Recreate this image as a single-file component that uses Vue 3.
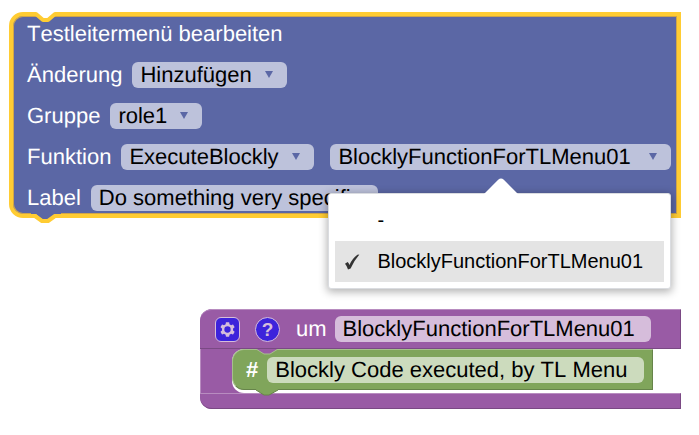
<script setup>
import { ref } from 'vue'

const action = ref('Hinzufügen')
const group = ref('role1')
const kind = ref('ExecuteBlockly')
const target = ref('BlocklyFunctionForTLMenu01')
const label = ref('Do something very specific')
const procedureName = ref('BlocklyFunctionForTLMenu01')
const comment = ref('Blockly Code executed, by TL Menu')

const targets = ['-', 'BlocklyFunctionForTLMenu01']
const menuOpen = ref(true)

function choose(name) {
  target.value = name
  menuOpen.value = false
}
</script>

<template>
  <main class="workspace">
    <section class="block menu-block">
      <svg class="notch-top" width="30" height="12" viewBox="0 0 30 12" aria-hidden="true">
        <path class="cut" d="M3 0 L11 6 H18 L26 0Z" />
        <path class="outline" d="M0 2 H5 L12 8 H17 L24 2 H30" />
      </svg>
      <svg class="notch-bottom" width="30" height="12" viewBox="0 0 30 12" aria-hidden="true">
        <path class="body" d="M0 0 H30 V1 H24 L17 7 H12 L5 1 H0Z" />
        <path class="outline" d="M0 3 H4 L11 8 H17 L24 3 H30" />
      </svg>

      <div class="row">Testleitermenü bearbeiten</div>
      <div class="row">
        <label for="action">Änderung</label>
        <span class="dropdown">
          <select id="action" v-model="action" class="field"><option>Hinzufügen</option></select>
          <svg class="caret" viewBox="0 0 8 7" aria-hidden="true"><path d="M0 0H8L4 7Z" /></svg>
        </span>
      </div>
      <div class="row">
        <label for="group">Gruppe</label>
        <span class="dropdown">
          <select id="group" v-model="group" class="field"><option>role1</option></select>
          <svg class="caret" viewBox="0 0 8 7" aria-hidden="true"><path d="M0 0H8L4 7Z" /></svg>
        </span>
      </div>
      <div class="row">
        <label for="kind">Funktion</label>
        <span class="dropdown kind">
          <select id="kind" v-model="kind" class="field"><option>ExecuteBlockly</option></select>
          <svg class="caret" viewBox="0 0 8 7" aria-hidden="true"><path d="M0 0H8L4 7Z" /></svg>
        </span>
        <span class="dropdown target">
          <select v-model="target" class="field" aria-label="Funktion" @mousedown.prevent="menuOpen = !menuOpen">
            <option v-for="name in targets" :key="name">{{ name }}</option>
          </select>
          <svg class="caret" viewBox="0 0 8 7" aria-hidden="true"><path d="M0 0H8L4 7Z" /></svg>
          <div v-if="menuOpen" class="popup" role="listbox" aria-label="Funktion">
            <button
              v-for="name in targets"
              :key="name"
              type="button"
              role="option"
              class="option"
              :class="{ selected: name === target }"
              :aria-selected="name === target"
              @click="choose(name)"
            >
              <svg v-if="name === target" class="check" viewBox="0 0 16 16" aria-hidden="true">
                <path d="M1 9.8 L3.6 8 Q4.9 9.2 5.4 11 Q8.4 4.4 13.4 0.8 L15.4 0.4 Q10.4 6 6.6 14.4 L4 15.6 Q3 12 1 9.8Z" />
              </svg>
              {{ name }}
            </button>
          </div>
        </span>
      </div>
      <div class="row">
        <label for="label">Label</label>
        <input id="label" v-model="label" class="field label-input" type="text" />
      </div>
    </section>

    <section class="procedure">
      <header class="head">
        <button class="icon gear" type="button" aria-label="Einstellungen">
          <svg viewBox="0 0 16 16" aria-hidden="true">
            <path
              fill-rule="evenodd"
              d="m4.203,7.296 0,1.368 -0.92,0.677 -0.11,0.41 0.9,1.559 0.41,0.11 1.043,-0.457 1.187,0.683 0.127,1.134 0.3,0.3 1.8,0 0.3,-0.299 0.127,-1.138 1.185,-0.682 1.046,0.458 0.409,-0.11 0.9,-1.559 -0.11,-0.41 -0.92,-0.677 0,-1.366 0.92,-0.677 0.11,-0.41 -0.9,-1.559 -0.409,-0.109 -1.046,0.458 -1.185,-0.682 -0.127,-1.138 -0.3,-0.299 -1.8,0 -0.3,0.3 -0.126,1.135 -1.187,0.682 -1.043,-0.457 -0.41,0.11 -0.899,1.559 0.108,0.409z M10.2 8a2.2 2.2 0 1 0 -4.4 0a2.2 2.2 0 1 0 4.4 0z"
            />
          </svg>
        </button>
        <button class="icon help" type="button">?</button>
        <label for="procedure-name">um</label>
        <input id="procedure-name" v-model="procedureName" class="field name-input" type="text" />
      </header>
      <div class="slot">
        <div class="comment-block">
          <svg class="comment-notch" width="26" height="8" viewBox="0 0 26 8" aria-hidden="true">
            <path class="socket" d="M2 0 L10 5 H16 L24 0Z" />
            <path class="lit" d="M2 0 L10 5 H16 L24 0" />
          </svg>
          <svg class="comment-tab" width="26" height="8" viewBox="0 0 26 8" aria-hidden="true">
            <path class="leaf" d="M2 0 V1 L10 6 H15 L24 1 V0Z" />
            <path class="shade" d="M2 1 L10 6 H15 L24 1" />
          </svg>
          <label for="comment">#</label>
          <input id="comment" v-model="comment" class="field comment-input" type="text" />
        </div>
      </div>
      <div class="foot"></div>
    </section>
  </main>
</template>

<style>
body {
  background: #fff;
}
</style>

<style scoped>
.workspace {
  position: relative;
  min-height: 100vh;
  box-sizing: border-box;
  padding: 12px 18px 0 9px;
  font: 22px/26px "Liberation Sans", Arial, sans-serif;
  font-kerning: none;
  text-rendering: geometricPrecision;
  color: #fff;
}
.menu-block {
  position: relative;
  z-index: 1;
  display: flex;
  flex-direction: column;
  gap: 15px;
  padding: 5px 6px 3px 14px;
  border: 4px solid #fc3;
  border-radius: 14px 0 0 14px;
  background: #5b67a5;
  box-shadow: inset 0 0 0 1px #d0a548;
}
.row {
  display: flex;
  align-items: center;
  gap: 10px;
  height: 26px;
}
.notch-top,
.notch-bottom {
  position: absolute;
  left: 18px;
}
.notch-top {
  top: -4px;
}
.notch-bottom {
  bottom: -11px;
}
.cut {
  fill: #fff;
}
.body {
  fill: #5b67a5;
}
.outline {
  fill: none;
  stroke: #fc3;
  stroke-width: 4;
  stroke-linejoin: round;
}
.field {
  box-sizing: border-box;
  height: 26px;
  margin: 0;
  padding: 0 8px;
  border: 0;
  border-radius: 6px;
  outline: 0;
  appearance: none;
  background: rgba(255, 255, 255, 0.6);
  color: #000;
  font: inherit;
  font-kerning: none;
  text-rendering: geometricPrecision;
}
.dropdown {
  position: relative;
  display: flex;
}
.dropdown .field {
  width: 100%;
  padding-right: 35px;
}
.caret {
  position: absolute;
  top: 9px;
  right: 14px;
  width: 8px;
  height: 7px;
  fill: #5b67a5;
  pointer-events: none;
}
.kind {
  margin-right: 6px;
}
.target {
  flex: 1;
}
.label-input {
  width: 287px;
}
.popup {
  position: absolute;
  top: 49px;
  left: -2px;
  right: 0;
  padding: 6px;
  border: 1px solid #dadce0;
  border-radius: 3px;
  background: #fff;
  box-shadow: 0 2px 9px 1px rgba(0, 0, 0, 0.3);
}
.popup::before {
  content: "";
  position: absolute;
  top: -12px;
  left: 50%;
  width: 24px;
  height: 24px;
  margin-left: -11px;
  border-radius: 4px 0 0 0;
  background: #fff;
  transform: rotate(45deg);
}
.option {
  position: relative;
  display: block;
  width: 100%;
  height: 41px;
  padding: 0 0 0 42px;
  border: 0;
  background: #fff;
  color: #000;
  font: 20px/41px "Liberation Sans", Arial, sans-serif;
  text-align: left;
}
.option.selected {
  background: #e4e4e4;
}
.check {
  position: absolute;
  top: 13px;
  left: 9px;
  width: 16px;
  height: 16px;
  fill: #333;
}
.procedure {
  margin: 91px 0 0 191px;
  border-radius: 12px 0 0 12px;
  background: linear-gradient(90deg, #b88cc0 1px, #995ba5 1px) 0 0 / 60px 100% no-repeat;
}
.head {
  display: flex;
  align-items: center;
  height: 40px;
  box-sizing: border-box;
  padding: 0 29px 0 15px;
  border: solid #7a4984;
  border-width: 1px 1px 1px 0;
  border-top-color: #b88cc0;
  border-radius: 12px 0 0 0;
  background: #995ba5;
}
.icon {
  box-sizing: border-box;
  width: 25px;
  height: 25px;
  margin: 0 15px 0 0;
  padding: 0;
  border: 1px solid #d6bddb;
  background: #3d23db;
  color: #d6bddb;
  font: bold 19px/23px "Liberation Sans", Arial, sans-serif;
  text-align: center;
}
.gear {
  border-radius: 6px;
}
.gear svg {
  display: block;
  width: 23px;
  height: 23px;
  fill: #d6bddb;
}
.help {
  margin-right: 16px;
  border-radius: 50%;
}
.name-input {
  flex: 1;
  min-width: 0;
  margin-left: 8px;
}
.slot {
  display: flex;
  margin-left: 32px;
  padding-bottom: 3px;
  border-radius: 12px 0 0 12px;
  background: #fff;
}
.comment-block {
  position: relative;
  display: flex;
  align-items: center;
  gap: 9px;
  box-sizing: border-box;
  height: 41px;
  padding: 0 8px 0 13px;
  border: 1px solid #66844a;
  border-top-color: #a6c08c;
  border-left-color: #a6c08c;
  border-radius: 12px 0 0 12px;
  background: #80a55b;
  font-weight: bold;
}
.comment-notch,
.comment-tab {
  position: absolute;
  left: 21px;
}
.comment-notch {
  top: -1px;
}
.comment-tab {
  bottom: -8px;
}
.socket {
  fill: #995ba5;
}
.leaf {
  fill: #80a55b;
}
.lit,
.shade {
  fill: none;
  stroke: #a6c08c;
}
.shade {
  stroke: #66844a;
}
.comment-input {
  width: 377px;
  font-weight: normal;
}
.foot {
  height: 16px;
  box-sizing: border-box;
  border: solid #7a4984;
  border-width: 1px 1px 1px 0;
  border-top-color: #b88cc0;
  border-radius: 0 0 0 12px;
  background: #995ba5;
}
</style>
